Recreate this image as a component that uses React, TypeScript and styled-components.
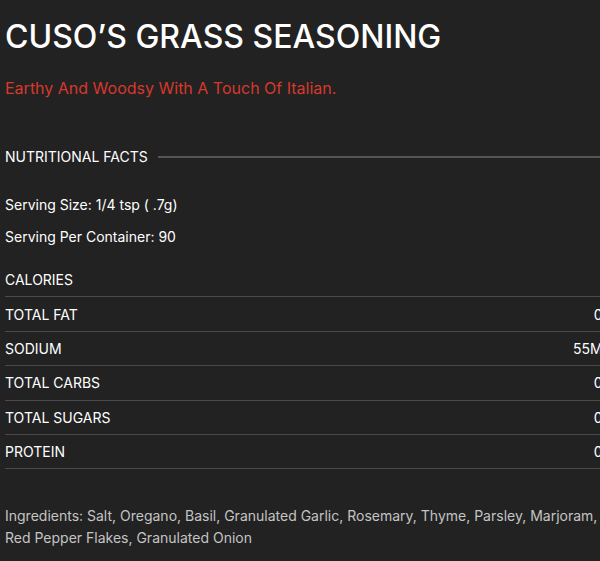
import React from 'react';
import styled, { createGlobalStyle } from 'styled-components';

interface INutrient {
  label: string;
  value: string;
}

const nutrients: INutrient[] = [
  { label: 'CALORIES', value: '' },
  { label: 'TOTAL FAT', value: '0G' },
  { label: 'SODIUM', value: '55MG' },
  { label: 'TOTAL CARBS', value: '0G' },
  { label: 'TOTAL SUGARS', value: '0G' },
  { label: 'PROTEIN', value: '0G' },
];

function App() {
  return (
    <>
      <GlobalStyle />
      <Page>
        <Title>CUSO’S GRASS SEASONING</Title>
        <Tagline>Earthy And Woodsy With A Touch Of Italian.</Tagline>
        <SectionHead>
          <span>NUTRITIONAL FACTS</span>
          <Rule />
        </SectionHead>
        <Serving>
          <p>Serving Size: 1/4 tsp ( .7g)</p>
          <p>Serving Per Container: 90</p>
        </Serving>
        <FactList>
          {nutrients.map((n) => (
            <FactRow key={n.label}>
              <span>{n.label}</span>
              <span>{n.value}</span>
            </FactRow>
          ))}
        </FactList>
        <Ingredients>
          Ingredients: Salt, Oregano, Basil, Granulated Garlic, Rosemary, Thyme, Parsley, Marjoram, Red Pepper Flakes,
          Granulated Onion
        </Ingredients>
      </Page>
    </>
  );
}

const GlobalStyle = createGlobalStyle`
  html, body {
    margin: 0;
    padding: 0;
    background: #222222;
    overflow: hidden;
  }
`;

const Page = styled.div`
  width: 608px;
  padding: 0 0 0 5px;
  font-family: Inter, 'Liberation Sans', sans-serif;
  color: #ffffff;
`;

const Title = styled.h1`
  margin: 0;
  padding-top: 18px;
  font-size: 32px;
  font-weight: 500;
  line-height: 38px;
`;

const Tagline = styled.p`
  margin: 0;
  padding-top: 22px;
  font-size: 16px;
  line-height: 20px;
  color: #d8382c;
`;

const SectionHead = styled.div`
  display: flex;
  align-items: center;
  gap: 10px;
  margin-top: 50px;
  font-size: 14px;
  line-height: 18px;
`;

const Rule = styled.div`
  flex: 1;
  height: 2px;
  background: #555555;
`;

const Serving = styled.div`
  margin-top: 30px;
  font-size: 14px;
  line-height: 18px;

  p {
    margin: 0 0 14px;
  }
`;

const FactList = styled.div`
  margin-top: 17px;
`;

const FactRow = styled.div`
  display: flex;
  justify-content: space-between;
  align-items: center;
  height: 33.4px;
  border-bottom: 1px solid #4a4a4a;
  font-size: 14px;
`;

const Ingredients = styled.p`
  margin: 36px 0 0;
  width: 600px;
  font-size: 14px;
  line-height: 22px;
  color: #c4c4c4;
`;

export default App;
